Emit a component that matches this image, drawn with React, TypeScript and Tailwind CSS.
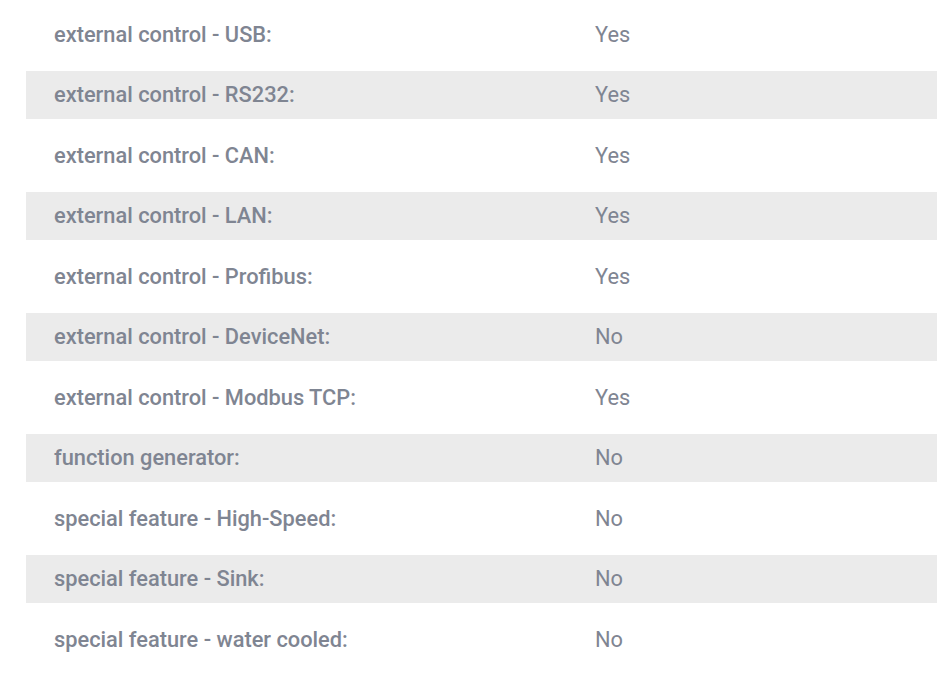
const rows: [string, string][] = [
  ["external control - USB:", "Yes"],
  ["external control - RS232:", "Yes"],
  ["external control - CAN:", "Yes"],
  ["external control - LAN:", "Yes"],
  ["external control - Profibus:", "Yes"],
  ["external control - DeviceNet:", "No"],
  ["external control - Modbus TCP:", "Yes"],
  ["function generator:", "No"],
  ["special feature - High-Speed:", "No"],
  ["special feature - Sink:", "No"],
  ["special feature - water cooled:", "No"],
];

export default function App() {
  return (
    <div className="min-h-screen bg-white pl-[26px] pt-[10px] font-['Roboto',sans-serif] text-[21.8px] text-[#7f8592]">
      <div className="flex flex-col gap-[12.5px]">
        {rows.map(([label, value], i) => (
          <div
            key={label}
            className={`grid h-[48px] grid-cols-[541px_1fr] items-center pt-[2px] ${i % 2 === 1 ? "bg-[#ebebeb]" : ""}`}
          >
            <div className="pl-[28px] font-medium">{label}</div>
            <div className="pl-[28px]">{value}</div>
          </div>
        ))}
      </div>
    </div>
  );
}
